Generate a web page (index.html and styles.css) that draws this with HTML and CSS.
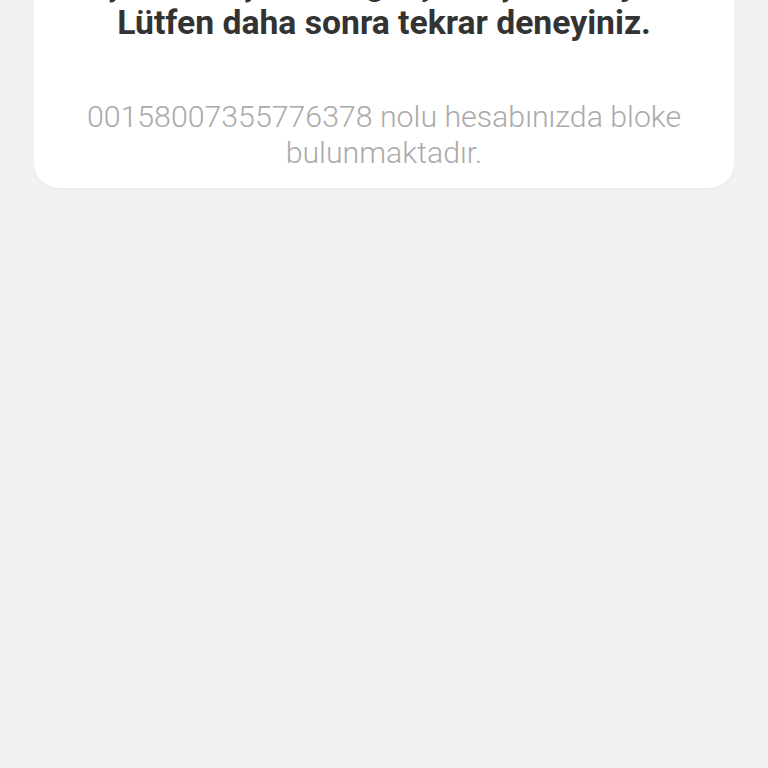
FILE: index.html
```html
<!DOCTYPE html>
<html lang="tr">
<head>
<meta charset="utf-8">
<title>Bilgi</title>
<link rel="stylesheet" href="styles.css">
</head>
<body>
<main class="page">
  <section class="card">
    <h1 class="title">İşleminiz şu anda gerçekleştirilemiyor. Lütfen daha sonra tekrar deneyiniz.</h1>
    <p class="detail">00158007355776378 nolu hesabınızda bloke bulunmaktadır.</p>
  </section>
</main>
</body>
</html>
```
FILE: styles.css
```css
html, body {
  margin: 0;
  padding: 0;
  background: #f2f1ef;
}
body {
  font-family: Roboto, "Noto Sans", "Liberation Sans", sans-serif;
  width: 768px;
  height: 768px;
  overflow: hidden;
}
.page {
  display: flex;
  flex-direction: column;
  padding: 0 34px;
}
.card {
  margin-top: -60px;
  padding: 24px 24px 17px;
  background: #ffffff;
  border-radius: 25px;
  text-align: center;
  box-shadow: 0 1px 2px rgba(0, 0, 0, 0.03);
}
.title {
  margin: 0 0 57px;
  font-size: 33.7px;
  line-height: 39px;
  font-weight: 700;
  color: #333333;
}
.detail {
  margin: 0;
  font-size: 30.3px;
  line-height: 36px;
  font-weight: 300;
  color: #aaaaaa;
}
```
